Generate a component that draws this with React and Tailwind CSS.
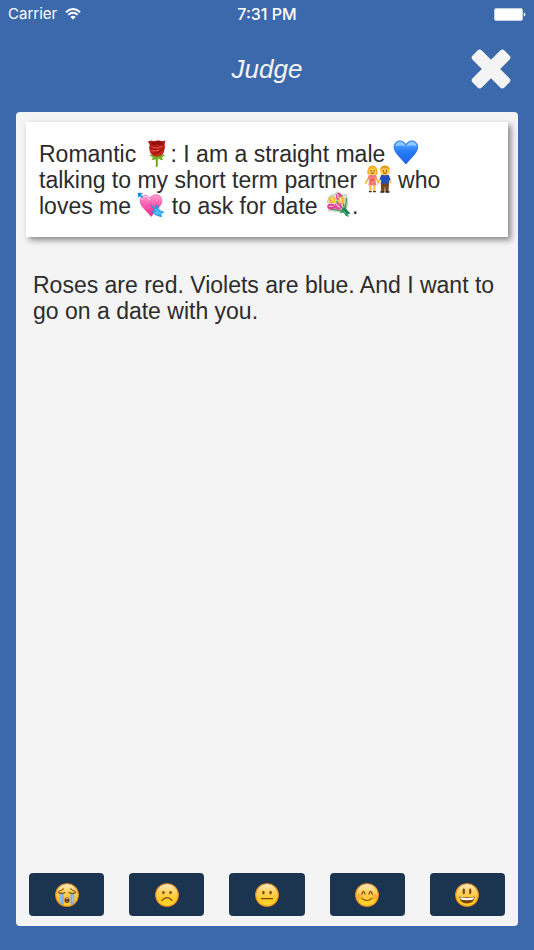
import React, { useState } from 'react';

const EMOJI = 'inline-block w-7 h-7 -my-1 align-[-1px]';

function WifiIcon() {
  return (
    <svg viewBox="0 0 16 12" className="w-4 h-3" fill="none" stroke="#fff" strokeWidth="1.9" aria-hidden="true">
      <path d="M0.9 4.2 Q8 -2.2 15.1 4.2" />
      <path d="M3.3 6.8 Q8 2.6 12.7 6.8" />
      <path d="M8 11.6 L5.3 8.9 Q8 6.8 10.7 8.9 Z" fill="#fff" stroke="none" />
    </svg>
  );
}

function BatteryIcon() {
  return (
    <svg viewBox="0 0 32 13" className="w-8 h-[13px]" aria-label="Battery full">
      <rect x="0.5" y="0.5" width="28" height="12" rx="1.6" fill="#fff" stroke="#c9d8ee" strokeWidth="0.8" />
      <path d="M29.8 4.4 Q31.4 5 31.4 6.5 Q31.4 8 29.8 8.6 Z" fill="#fff" />
    </svg>
  );
}

function CloseIcon() {
  return (
    <svg viewBox="0 0 40 40" className="size-10" aria-hidden="true">
      <g fill="#f4f4f4" transform="rotate(45 20 20)">
        <rect x="-2.5" y="13.5" width="45" height="13" rx="3" />
        <rect x="13.5" y="-2.5" width="13" height="45" rx="3" />
      </g>
    </svg>
  );
}

function Rose() {
  return (
    <svg viewBox="0 0 27 28" className={EMOJI} role="img" aria-label="rose">
      <path d="M13.4 16 L13.2 27" stroke="#5f9e1f" strokeWidth="1.8" strokeLinecap="round" />
      <path d="M5.2 16.5 Q7.5 15 10 15.5 L17.5 15.5 Q20 15.2 22 16.2 Q19.5 17 18.4 18.6 L19.5 21.2 Q16.5 20.8 15 19.4 L12.5 20.6 L8.2 21 L9.3 18.4 Q7.5 16.6 5.2 16.5 Z" fill="#6fae25" />
      <path d="M4.4 2.2 L8 1.4 L10.3 2.2 L15 1.2 L18 2.2 L22 1.5 L21.2 5.5 Q22 8 20.9 11 Q20.3 15.4 17.4 16.4 Q13 18.6 9.3 16.2 Q6.2 14.5 5.9 10.5 Q5.2 8.4 6.2 6 Z" fill="#c9241c" />
      <path d="M6.5 3.2 L10.5 2.6 L15.5 2.1 L20.3 2.8 L17.5 5.8 L9.5 5.9 Z" fill="#8c1111" />
      <path d="M6.4 5 Q9.5 8.8 15 7.8 L20.8 4.8 M6.4 8.6 Q10.5 11.4 13.4 11 M20.6 8.2 Q17.5 13.5 9 14.8" fill="none" stroke="#7c0d0d" strokeWidth="1" />
      <path d="M8 7.7 Q11.5 9.8 18.5 7.2 M8 11.2 Q11 12.7 15.5 11.2" fill="none" stroke="#ef5a48" strokeWidth="0.9" />
    </svg>
  );
}

function BlueHeart() {
  return (
    <svg viewBox="0 0 27 28" className={EMOJI} role="img" aria-label="blue heart">
      <defs>
        <linearGradient id="blueHeart" x1="0" y1="0" x2="0" y2="1">
          <stop offset="0" stopColor="#5cb4ff" />
          <stop offset="0.45" stopColor="#2a7cf6" />
          <stop offset="1" stopColor="#1762f0" />
        </linearGradient>
      </defs>
      <path d="M13.4 5.6 C11.6 2.6 9.5 1.9 7.4 1.9 C3.8 1.9 1.6 4.6 1.6 8 C1.6 13.6 8 18.6 13.4 25 C18.8 18.6 25.2 13.6 25.2 8 C25.2 4.6 23 1.9 19.4 1.9 C17.3 1.9 15.2 2.6 13.4 5.6 Z" fill="url(#blueHeart)" stroke="#1559d8" strokeWidth="0.7" />
      <path d="M3 7.6 C3.2 4.5 5.2 3 7.5 3 C10 3 12 5 12.6 7.4 C9.8 6.2 6.5 6.3 3 7.6 Z M14.2 7.4 C15 4.6 17 3 19.4 3 C21.8 3 23.6 4.6 23.9 7.6 C20.3 6.3 17 6.3 14.2 7.4 Z" fill="#a8d8ff" opacity="0.75" />
    </svg>
  );
}

function Couple() {
  return (
    <svg viewBox="0 0 27 28" className={EMOJI} role="img" aria-label="couple holding hands">
      {/* legs and shoes */}
      <path d="M6 19 V26 M9.8 19 V26" stroke="#f6bd42" strokeWidth="2.2" />
      <path d="M4.4 26.6 H7.2 M8.6 26.6 H11.4" stroke="#3c2b20" strokeWidth="1.4" />
      <path d="M16.2 17 H24.6 L24 27 H21 L20.5 20.5 L19.9 27 H16.8 Z" fill="#74451c" />
      <path d="M15.8 27 H19.8 M21 27 H25" stroke="#2d211a" strokeWidth="1.3" />
      {/* arms */}
      <path d="M5 11.5 L1.2 18 M10.8 11.5 L13.6 17.6 L17 12 M24 11.5 L26 17.6" fill="none" stroke="#f6bd42" strokeWidth="1.8" strokeLinecap="round" />
      <path d="M4.4 10 H11.4 L12.4 14 L10.7 13.6 L12 20.2 H3.8 L5.1 13.6 L3 14.6 Z" fill="#f57c78" />
      <path d="M5.2 15 H10.6" stroke="#c84848" strokeWidth="0.9" />
      <path d="M16.8 9.8 H24 L26.2 14.8 L24.5 15.3 V18.4 H16.6 V15 L15 14.4 Z" fill="#1f50bd" />
      {/* heads */}
      <path d="M3 9.6 Q1.8 1 7.9 0.4 Q14 1 12.8 9.6 Z" fill="#eba917" />
      <ellipse cx="7.9" cy="6" rx="3.9" ry="4.1" fill="#ffcb50" />
      <path d="M4 4.4 Q7.8 0.5 11.8 4.4" fill="none" stroke="#f6bb2b" strokeWidth="1.7" />
      <ellipse cx="20.4" cy="5.7" rx="4.9" ry="4.6" fill="#ffc84c" />
      <path d="M15.7 5 Q15.7 0.4 20.4 0.4 Q25.2 0.4 25.2 5 L22.8 3.3 L18 3.3 Z" fill="#dfa019" />
      <path d="M6 5.8 H7 M9 5.8 H10 M18.3 5.8 H19.4 M21.4 5.8 H22.5" stroke="#4b2d10" strokeWidth="1.2" />
      <path d="M6.4 7.9 Q7.9 9.1 9.5 7.9 Z M18.7 7.9 Q20.4 9.3 22 7.9 Z" fill="#9a4a17" stroke="#9a4a17" strokeWidth="0.5" />
    </svg>
  );
}

function ArrowHeart() {
  return (
    <svg viewBox="0 0 27 28" className={EMOJI} role="img" aria-label="heart with arrow">
      <defs>
        <linearGradient id="pinkHeart" x1="0" y1="0" x2="0" y2="1">
          <stop offset="0" stopColor="#ff9fd2" />
          <stop offset="0.5" stopColor="#ff56ab" />
          <stop offset="1" stopColor="#f5268c" />
        </linearGradient>
      </defs>
      <path d="M12.6 7.3 C11 4.8 9 4 7.3 4.2 C4 4.5 2.4 7.3 2.7 10.5 C3.2 15.6 9 19.5 13.7 25.6 C17.8 19.5 24.3 15.4 24.3 9.5 C24.2 6 21.8 3.7 18.6 3.8 C16 3.9 13.8 4.9 12.6 7.3 Z" fill="url(#pinkHeart)" stroke="#e0409a" strokeWidth="0.6" />
      <path d="M4.2 9 C4.4 6.5 5.8 5.4 7.5 5.4 C9.7 5.4 11.3 7 12 9" fill="none" stroke="#ffd0ea" strokeWidth="1.2" />
      <path d="M1.5 3 L5.3 6.8" stroke="#1388dc" strokeWidth="1.6" />
      <path d="M0.2 1.8 L5.4 2 L4 3.6 L2.2 5.6 L0.8 6.8 Z" fill="#1688dd" />
      <path d="M13 13.4 L18.8 18.4 L18.3 13.6 L20.8 15.7 L21.5 18.4 L26.6 21.6 L23.4 22 L24 25.8 L18.8 24.3 L13.6 20.5 L17.5 20.2 Z" fill="#26a9f4" stroke="#1385d0" strokeWidth="0.6" strokeLinejoin="round" />
      <path d="M17.5 17.8 L23.2 23.2 M16.7 21 L21 22.8 M20.8 17.4 L23.6 20.7" stroke="#8fdcff" strokeWidth="0.9" />
    </svg>
  );
}

function Bouquet() {
  return (
    <svg viewBox="0 0 27 28" className={EMOJI} role="img" aria-label="bouquet">
      <path d="M5 5 L14 0.8 L16 4 L22 3.2 L23.4 12 L21 22 L13 20.5 L3.2 19.8 L6 15 L2.4 11 Z" fill="#d7dfcf" stroke="#a9b5a4" strokeWidth="0.5" />
      <path d="M17 4 L20 18 M6 18 L20 20 M22 7 L20.5 20 M12 10 L21 21" fill="none" stroke="#529b51" strokeWidth="1.4" />
      <path d="M18.2 17.6 L20.6 17 L26 22.4 L23.2 23.2 L24.4 26 L21 24.4 L19.6 22 L15 21.4 Z" fill="#188254" />
      <path d="M18.2 19 L24.2 25.2 M15 20 L21 21.6" stroke="#6fc37e" strokeWidth="0.7" />
      <ellipse cx="14.3" cy="5.6" rx="2.8" ry="3.8" fill="#e3429e" />
      <ellipse cx="7.6" cy="8.9" rx="3.5" ry="3.3" fill="#fbb92c" />
      <ellipse cx="16.7" cy="9.4" rx="3.1" ry="3.9" fill="#fbbd30" />
      <ellipse cx="6.7" cy="15.6" rx="4" ry="2.8" fill="#e03b98" />
      <ellipse cx="13.6" cy="15.3" rx="3.6" ry="3.4" fill="#ec4ba5" />
      <path d="M13.4 3.2 V6.5 M7 7.2 L9.4 9.6 M16 7 V11 M5 15.2 H8.6 M12.3 13.6 L14.8 16" stroke="#ffe6b4" strokeWidth="1.1" strokeLinecap="round" />
    </svg>
  );
}

function Face({ children }) {
  return (
    <svg viewBox="0 0 24 24" className="size-6" aria-hidden="true">
      <defs>
        <linearGradient id="face" x1="0" y1="0" x2="0" y2="1">
          <stop offset="0" stopColor="#ffeec4" />
          <stop offset="0.35" stopColor="#ffd163" />
          <stop offset="0.7" stopColor="#ffca25" />
          <stop offset="1" stopColor="#ffd92f" />
        </linearGradient>
      </defs>
      <circle cx="12" cy="12" r="11.3" fill="url(#face)" stroke="#f08d1d" strokeWidth="1.1" />
      {children}
    </svg>
  );
}

const INK = '#7a4a0c';

const RATINGS = [
  {
    id: 'sob',
    label: 'Terrible',
    face: (
      <>
        <path d="M4.6 11 H8.6 V22.4 Q6 21.2 4.6 19 Z M15.4 11 H19.4 V19 Q18 21.2 15.4 22.4 Z" fill="#7fa9dd" />
        <path d="M6 12 V19.5 M17.8 12 V19.5" stroke="#b5d1ef" strokeWidth="0.9" />
        <path d="M3.2 9.6 Q6.5 11.2 10 9.6 M14 9.6 Q17.5 11.2 20.8 9.6 M3.8 8.2 Q6.5 7.6 8.4 5.8 M20.2 8.2 Q17.5 7.6 15.6 5.8" fill="none" stroke={INK} strokeWidth="1.1" strokeLinecap="round" />
        <path d="M9.6 19 Q9 14 12 14 Q15 14 14.4 19 Q12 20.8 9.6 19 Z" fill="#713b12" />
        <path d="M10.6 15.2 H13.4" stroke="#fff" strokeWidth="1" />
        <path d="M10.4 18.6 Q12 17 13.6 18.6 Z" fill="#e77f72" />
      </>
    ),
  },
  {
    id: 'frown',
    label: 'Bad',
    face: (
      <>
        <ellipse cx="8.4" cy="9.6" rx="1.3" ry="1.7" fill={INK} />
        <ellipse cx="15.6" cy="9.6" rx="1.3" ry="1.7" fill={INK} />
        <path d="M6.8 17.6 Q12 11.6 17.2 17.6" fill="none" stroke={INK} strokeWidth="1.1" strokeLinecap="round" />
      </>
    ),
  },
  {
    id: 'neutral',
    label: 'Neutral',
    face: (
      <>
        <ellipse cx="8.4" cy="9.6" rx="1.2" ry="1.9" fill={INK} />
        <ellipse cx="15.6" cy="9.6" rx="1.2" ry="1.9" fill={INK} />
        <path d="M6.4 15.6 H17.6" stroke={INK} strokeWidth="1.2" strokeLinecap="round" />
      </>
    ),
  },
  {
    id: 'smile',
    label: 'Good',
    face: (
      <>
        <circle cx="4.4" cy="13.6" r="2.8" fill="#ff8a3a" opacity="0.45" />
        <circle cx="19.6" cy="13.6" r="2.8" fill="#ff8a3a" opacity="0.45" />
        <path d="M6.8 11 Q8.4 5.8 10 11 M14 11 Q15.6 5.8 17.2 11" fill="none" stroke={INK} strokeWidth="1.3" strokeLinecap="round" />
        <path d="M7.2 15.4 Q12 19.6 16.8 15.4" fill="none" stroke={INK} strokeWidth="1.2" strokeLinecap="round" />
      </>
    ),
  },
  {
    id: 'grin',
    label: 'Great',
    face: (
      <>
        <ellipse cx="8.8" cy="8.2" rx="1.2" ry="3" fill={INK} />
        <ellipse cx="15.2" cy="8.2" rx="1.2" ry="3" fill={INK} />
        <path d="M4.2 13.4 Q12 15.2 19.8 13.4 Q19 20.4 12 20.4 Q5 20.4 4.2 13.4 Z" fill="#7a410d" />
        <path d="M5 14.2 Q12 15.8 19 14.2 L18.3 16.6 Q12 18 5.7 16.6 Z" fill="#fff" />
      </>
    ),
  },
];

function StatusBar() {
  return (
    <div className="grid grid-cols-3 items-center h-7 px-2 text-[15px] leading-5 text-white">
      <div className="flex items-center gap-2">
        <span>Carrier</span>
        <WifiIcon />
      </div>
      <span className="text-center text-base font-medium whitespace-nowrap">7:31 PM</span>
      <div className="flex justify-end">
        <BatteryIcon />
      </div>
    </div>
  );
}

function RatingBar({ selected, onSelect }) {
  return (
    <div className="grid grid-cols-5 gap-[25px] px-[13px] pb-[10px]">
      {RATINGS.map(r => (
        <button
          key={r.id}
          type="button"
          aria-label={r.label}
          aria-pressed={selected === r.id}
          onClick={() => onSelect(r.id)}
          className="flex items-center justify-center h-[43px] rounded bg-[#1b3551]"
        >
          <Face>{r.face}</Face>
        </button>
      ))}
    </div>
  );
}

export default function App() {
  const [rating, setRating] = useState(null);

  return (
    <div className="flex flex-col min-h-screen bg-[#3c69ab] font-['Inter',sans-serif]">
      <StatusBar />

      {/* Title bar */}
      <header className="grid grid-cols-3 items-center h-[82px] mb-[2px] px-[23px] text-[#f4f4f4]">
        <h1 className="col-start-2 text-center text-[26px] leading-8 italic font-['Liberation_Sans',sans-serif]">Judge</h1>
        <button type="button" aria-label="Close" className="justify-self-end">
          <CloseIcon />
        </button>
      </header>

      <main className="flex flex-col flex-1 mx-4 mb-6 rounded bg-[#f4f4f4] text-[#2c2c2c] text-[23px] leading-[26px] font-['Liberation_Sans',sans-serif]">
        <p className="mx-[10px] mt-[10px] pt-[19px] pb-[18px] pl-[13px] pr-6 bg-white shadow-[3px_3px_6px_rgba(0,0,0,0.45)]">
          Romantic <Rose />: I am a straight male <BlueHeart /> talking to my short term
          partner <Couple /> who loves me <ArrowHeart /> to ask for date <Bouquet />.
        </p>
        <p className="flex-1 px-[17px] pt-[35px]">
          Roses are red. Violets are blue. And I want to go on a date with you.
        </p>
        <RatingBar selected={rating} onSelect={setRating} />
      </main>
    </div>
  );
}
